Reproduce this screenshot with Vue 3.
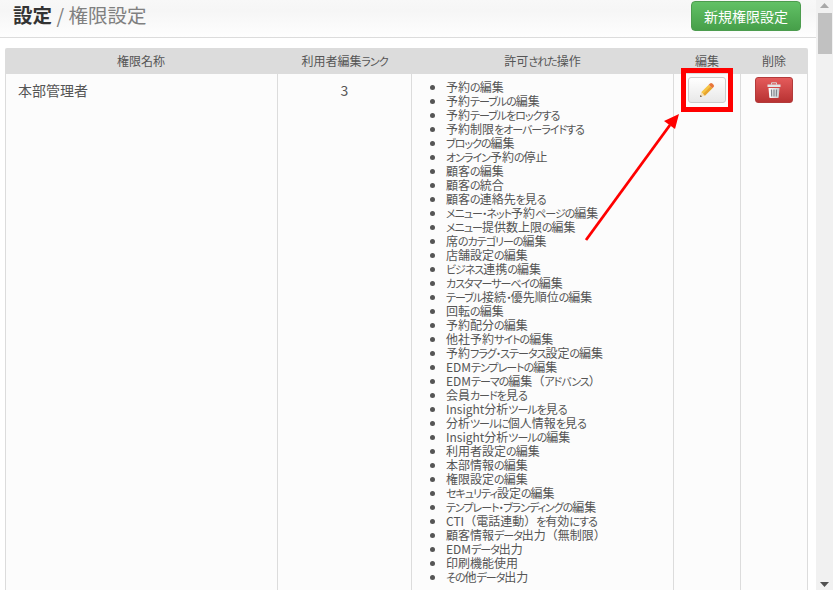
<script setup>
const ops = ['予約の編集','予約テーブルの編集','予約テーブルをロックする','予約制限をオーバーライドする','ブロックの編集','オンライン予約の停止','顧客の編集','顧客の統合','顧客の連絡先を見る','メニュー・ネット予約ページの編集','メニュー提供数上限の編集','席のカテゴリーの編集','店舗設定の編集','ビジネス連携の編集','カスタマーサーベイの編集','テーブル接続・優先順位の編集','回転の編集','予約配分の編集','他社予約サイトの編集','予約フラグ・ステータス設定の編集','EDMテンプレートの編集','EDMテーマの編集（アドバンス）','会員カードを見る','Insight分析ツールを見る','分析ツールに個人情報を見る','Insight分析ツールの編集','利用者設定の編集','本部情報の編集','権限設定の編集','セキュリティ設定の編集','テンプレート・ブランディングの編集','CTI（電話連動）を有効にする','顧客情報データ出力（無制限）','EDMデータ出力','印刷機能使用','その他データ出力']

// Kana are set narrower than kanji and brackets stay full width, as in the original UI font.
const runs = (text) => text.match(/[\u3040-\u30ff]+|[（）]+|[^\u3040-\u30ff（）]+/g).map((t) => ({
  t,
  cls: /[\u3040-\u30ff]/.test(t[0]) ? 'kana' : /[（）]/.test(t[0]) ? 'bracket' : '',
}))
</script>

<template>
  <div class="page">
    <main class="main">
      <header class="top">
        <h1 class="title"><strong>設定</strong><span class="sep"> / </span><span class="sub">権限設定</span></h1>
        <button class="btn-new">新規権限設定</button>
      </header>
      <div class="table">
        <div class="row head">
          <div class="c c1">権限名称</div>
          <div class="c c2"><span v-for="(r, i) in runs('利用者編集ランク')" :key="i" :class="r.cls">{{ r.t }}</span></div>
          <div class="c c3"><span v-for="(r, i) in runs('許可された操作')" :key="i" :class="r.cls">{{ r.t }}</span></div>
          <div class="c c4">編集</div>
          <div class="c c5">削除</div>
        </div>
        <div class="row body">
          <div class="c c1 name">本部管理者</div>
          <div class="c c2 rank">3</div>
          <div class="c c3 ops">
            <ul><li v-for="o in ops" :key="o"><span v-for="(r, i) in runs(o)" :key="i" class="run" :class="r.cls">{{ r.t }}</span></li></ul>
          </div>
          <div class="c c4 act">
            <button class="btn-edit">
              <svg width="16" height="16" viewBox="0 0 16 16">
                <path d="M2.200 10.200L9.700 2.700l3.600 3.600-7.500 7.500z" fill="#f6c445"/>
                <path d="M4 12L11.500 4.500l1.800 1.800-7.500 7.500z" fill="#e8a52e"/>
                <path d="M9.700 2.700L11 1.400q1.200-1 2.300 0l1.300 1.300q1 1.200 0 2.300L13.300 6.300z" fill="#e8763a"/>
                <path d="M1 15l1.200-4.800 3.600 3.600z" fill="#f6dfb6"/>
                <path d="M1 15l.5-2 1.500 1.500z" fill="#5a4a3a"/>
              </svg>
            </button>
          </div>
          <div class="c c5 act">
            <button class="btn-del">
              <svg width="14" height="16" viewBox="0 0 14 16">
                <defs>
                  <linearGradient id="can" x1="0" x2="1" y1="0" y2="0">
                    <stop offset="0" stop-color="#fff"/>
                    <stop offset="1" stop-color="#c9ccd0"/>
                  </linearGradient>
                </defs>
                <path d="M4.500 2.500V.8h5v1.700" fill="none" stroke="#d8d8d8" stroke-width="1"/>
                <path d="M.5 2.500h13v2.500H.5z" fill="#e4e6e8"/>
                <path d="M1.500 6h11l-.8 9.200c0 .5-.3.8-.8.800H3.100c-.5 0-.8-.3-.8-.8z" fill="url(#can)"/>
                <path d="M4.500 7.500l.2 7M7 7.500v7M9.500 7.500l-.2 7" stroke="#80858c" stroke-width="1.200"/>
              </svg>
            </button>
          </div>
        </div>
      </div>
    </main>

    <div class="scrollbar">
      <svg class="sb-up" width="9" height="5" viewBox="0 0 9 5"><path d="M4.500 0L9 5H0z" fill="#a8a8a8"/></svg>
      <div class="thumb"></div>
      <svg class="sb-down" width="9" height="5" viewBox="0 0 9 5"><path d="M0 0h9L4.500 5z" fill="#505050"/></svg>
    </div>

    <div class="mark"></div>
    <svg class="arrow" width="110" height="140" viewBox="0 0 110 140">
      <path d="M6 130L90 15" stroke="#ff0000" stroke-width="2.800" fill="none"/>
      <path d="M99 4L95 19L84 11z" fill="#ff0000"/>
    </svg>
  </div>
</template>

<style scoped>
.page {
  position: relative;
  width: 833px;
  height: 590px;
  overflow: hidden;
  background: #fff;
  font-family: "Noto Sans CJK JP", "Liberation Sans", sans-serif;
  font-feature-settings: "palt";
  color: #555;
}
.main { width: 816px; }
.top {
  box-sizing: border-box;
  height: 38px;
  display: flex;
  justify-content: space-between;
  align-items: flex-start;
  padding: 1px 15px 0 13px;
  border-bottom: 1px solid #dcdcdc;
  background: linear-gradient(#f8f8f8, #f6f6f6 30%, #fefefe);
}
.title {
  margin: 0;
  font-size: 19.500px;
  line-height: 28px;
  font-weight: 400;
  color: #808080;
}
.title strong { font-weight: 700; color: #333; }
.btn-new {
  box-sizing: border-box;
  width: 110px;
  height: 30px;
  border: 1px solid #4c9c4e;
  border-radius: 4px;
  background: linear-gradient(#62c166, #469f49);
  color: #fff;
  font: inherit;
  font-size: 14px;
  padding: 0;
}
.table {
  margin: 10px 8px 0 5px;
  width: 803px;
  background: #fcfcfc;
}
.row { display: flex; }
.c { box-sizing: border-box; }
.c1 { width: 273px; }
.c2 { width: 134px; }
.c3 { width: 262px; }
.c4 { width: 67px; }
.c5 { width: 67px; }
.head {
  height: 26px;
  background: #dcdcdc;
  border-radius: 2px 2px 0 0;
  font-size: 12px;
  line-height: 26px;
  text-align: center;
  color: #555;
}
.head .c { padding-right: 1px; }
.kana { font-size: 11px; letter-spacing: -1px; }
.bracket { font-feature-settings: normal; }
.run { display: inline-block; }
.body { height: 520px; }
.body .c { border-right: 1px solid #dcdcdc; }
.body .c1 { border-left: 1px solid #dcdcdc; }
.name { padding: 6px 0 0 12px; font-size: 14px; line-height: 20px; }
.rank { text-align: center; padding-top: 6px; font-size: 14px; line-height: 20px; }
.ops ul {
  margin: 0;
  padding: 6px 0 0 34px;
  font-size: 12px;
  line-height: 14px;
}
.ops li { height: 14px; }
.act { display: flex; justify-content: center; align-items: flex-start; padding-top: 3px; }
.btn-edit, .btn-del {
  box-sizing: border-box;
  width: 38px;
  height: 26px;
  padding: 0;
  border-radius: 3px;
  display: flex;
  align-items: center;
  justify-content: center;
}
.btn-edit { border: 1px solid #ccc; background: linear-gradient(#fff, #e8e8e8); }
.btn-del { border: 1px solid #b33a3a; background: linear-gradient(#e45b5b, #b83232); }
.scrollbar {
  position: absolute;
  top: 0;
  right: 0;
  width: 17px;
  height: 590px;
  background: #f1f1f1;
}
.thumb { position: absolute; top: 13px; left: 2px; width: 14px; height: 41px; background: #c1c1c1; }
.sb-up { position: absolute; top: 3px; left: 4px; }
.sb-down { position: absolute; bottom: 3px; left: 4px; }
.mark {
  position: absolute;
  left: 681px;
  top: 68px;
  width: 52px;
  height: 44px;
  box-sizing: border-box;
  border: 5px solid #ff0000;
}
.arrow { position: absolute; left: 580px; top: 110px; }
</style>
